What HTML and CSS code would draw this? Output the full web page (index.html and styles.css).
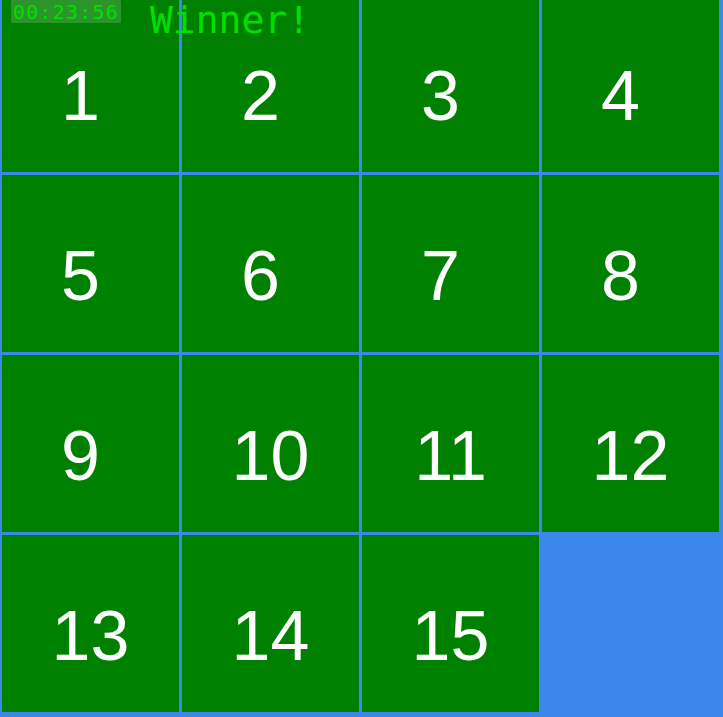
FILE: index.html
```html
<!DOCTYPE html>
<html lang="en">
<head>
<meta charset="utf-8">
<title>15 Puzzle</title>
<link rel="stylesheet" href="styles.css">
</head>
<body>
<div class="game">
  <div class="hud">
    <span class="timer">00:23:56</span>
    <span class="status">Winner!</span>
  </div>
  <div class="board">
    <div class="tile tile--one">1</div>
    <div class="tile tile--one">2</div>
    <div class="tile tile--one">3</div>
    <div class="tile tile--one">4</div>
    <div class="tile tile--one">5</div>
    <div class="tile tile--one">6</div>
    <div class="tile tile--one">7</div>
    <div class="tile tile--one">8</div>
    <div class="tile tile--one">9</div>
    <div class="tile">10</div>
    <div class="tile">11</div>
    <div class="tile">12</div>
    <div class="tile">13</div>
    <div class="tile">14</div>
    <div class="tile">15</div>
    <div class="tile tile--empty"></div>
  </div>
</div>
</body>
</html>
```

FILE: styles.css
```css
html, body {
  margin: 0;
  padding: 0;
  background: #ffffff;
  overflow: hidden;
}

.game {
  position: relative;
  width: 723px;
  height: 717px;
  overflow: hidden;
  background: #3b87eb;
}

.hud {
  position: absolute;
  top: 0;
  left: 0;
  right: 0;
  display: flex;
  align-items: flex-start;
  z-index: 2;
  font-family: "DejaVu Sans Mono", monospace;
  color: #00e000;
}

.timer {
  margin-left: 11px;
  padding: 2px 2px 1px 2px;
  font-size: 20px;
  line-height: 20px;
  letter-spacing: 1.2px;
  background: rgba(255, 255, 255, 0.17);
}

.status {
  margin-left: 29px;
  font-size: 38px;
  line-height: 40px;
}

.board {
  display: grid;
  grid-template-columns: repeat(4, 177px);
  grid-auto-rows: 177px;
  gap: 3px;
  margin-top: -5px;
  padding: 0 3px 5px 2px;
}

.tile {
  display: flex;
  align-items: center;
  justify-content: center;
  padding-top: 24px;
  box-sizing: border-box;
  background: #008000;
  color: #ffffff;
  font-family: "Liberation Sans", Arial, sans-serif;
  font-size: 70px;
  line-height: 1;
}

.tile--one {
  padding-right: 20px;
}

.tile--empty {
  background: transparent;
}
```
